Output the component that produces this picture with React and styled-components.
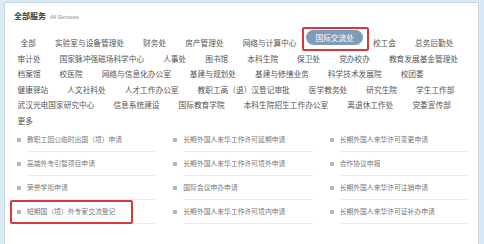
import React from 'react';
import styled, { createGlobalStyle } from 'styled-components';

const GlobalStyle = createGlobalStyle`
  html, body {
    margin: 0;
    padding: 0;
    background: #d8eaf6;
    font-family: "Noto Sans CJK SC", "Noto Sans", sans-serif;
  }
`;

const Card = styled.div`
  margin: 2px 5px 0 4px;
  height: 242px;
  overflow: hidden;
  background: #fff;
  border: 1px solid #c9d6e0;
  border-bottom: none;
  box-sizing: border-box;
`;

const Header = styled.div`
  display: flex;
  align-items: baseline;
  padding: 7px 0 0 9px;
  height: 12px;
  line-height: 12px;
`;

const Title = styled.span`
  font-size: 8px;
  font-weight: 700;
  color: #3a3a3a;
`;

const SubTitle = styled.span`
  margin-left: 4px;
  font-family: "Liberation Sans", Arial, sans-serif;
  font-size: 5.5px;
  color: #888;
`;

const TagList = styled.div`
  margin-top: 7.5px;
  padding-left: 3px;
`;

const TagRow = styled.div`
  display: flex;
  align-items: flex-end;
  min-height: 15.5px;
`;

const Tag = styled.span`
  position: relative;
  padding: 0 9.5px;
  margin-left: ${p => (p.$lead ? '3px' : '0')};
  height: ${p => (p.$active ? '15px' : '15.5px')};
  line-height: ${p => (p.$active ? '15px' : '15.5px')};
  margin-bottom: ${p => (p.$active ? '6px' : '0')};
  border-radius: 8px;
  font-size: 7.7px;
  white-space: nowrap;
  color: ${p => (p.$active ? '#fff' : '#555')};
  background: ${p => (p.$active ? '#7f9bb7' : 'transparent')};

  ${p => p.$active && `
    &::after {
      content: '';
      position: absolute;
      top: -3px;
      bottom: -6px;
      left: -4px;
      right: -6px;
      border: 2px solid #d33a3a;
      border-radius: 2px;
    }
  `}
`;

const Grid = styled.div`
  display: grid;
  grid-template-columns: repeat(3, 1fr);
  column-gap: 17px;
  padding: 0 9px 0 12px;
`;

const Item = styled.div`
  position: relative;
  display: flex;
  align-items: center;
  height: 24px;

  ${p => p.$marked && `
    &::after {
      content: '';
      position: absolute;
      top: 0;
      bottom: 0;
      left: -7px;
      width: 123px;
      border: 2px solid #d33a3a;
      border-radius: 2px;
      box-sizing: border-box;
    }
  `}
`;

const Bullet = styled.span`
  flex: none;
  width: 4px;
  height: 4px;
  margin: 0 6px 0 0;
  background: #a9b5c3;
  border-radius: 1px;
`;

const ItemBody = styled.div`
  flex: 1;
  height: 23px;
  line-height: 23px;
  border-bottom: 1px solid #ececec;
  font-size: 6.8px;
  color: #777;
  white-space: nowrap;
  overflow: hidden;
`;

const rows = [
  ['全部', '实验室与设备管理处', '财务处', '房产管理处', '网络与计算中心', '国际交流处', '校工会', '总务后勤处'],
  ['审计处', '国家脉冲强磁场科学中心', '人事处', '图书馆', '本科生院', '保卫处', '党办校办', '教育发展基金管理处'],
  ['档案馆', '校医院', '网络与信息化办公室', '基建与规划处', '基建与修缮业务', '科学技术发展院', '校团委'],
  ['健康驿站', '人文社科处', '人才工作办公室', '教职工高（退）汉登记审批', '医学教务处', '研究生院', '学生工作部'],
  ['武汉光电国家研究中心', '信息系统建设', '国际教育学院', '本科生院招生工作办公室', '离退休工作处', '党委宣传部'],
  ['更多'],
];

const items = [
  '教职工因公临时出国（境）申请', '长期外国人来华工作许可延期申请', '长期外国人来华许可变更申请',
  '高端外专引智项目申请', '长期外国人来华工作许可境外申请', '合作协议申报',
  '荣誉学衔申请', '国际会议申办申请', '长期外国人来华许可注销申请',
  '短期国（境）外专家交流登记', '长期外国人来华工作许可境内申请', '长期外国人来华许可证补办申请',
];

export default function App() {
  return (
    <>
      <GlobalStyle />
      <Card>
        <Header>
          <Title>全部服务</Title>
          <SubTitle>All Services</SubTitle>
        </Header>
        <TagList>
          {rows.map((row, i) => (
            <TagRow key={i}>
              {row.map((t, j) => (
                <Tag key={t} $lead={i === 0 && j === 0} $active={t === '国际交流处'}>{t}</Tag>
              ))}
            </TagRow>
          ))}
        </TagList>
        <Grid>
          {items.map(t => (
            <Item key={t} $marked={t === '短期国（境）外专家交流登记'}>
              <Bullet />
              <ItemBody>{t}</ItemBody>
            </Item>
          ))}
        </Grid>
      </Card>
    </>
  );
}
